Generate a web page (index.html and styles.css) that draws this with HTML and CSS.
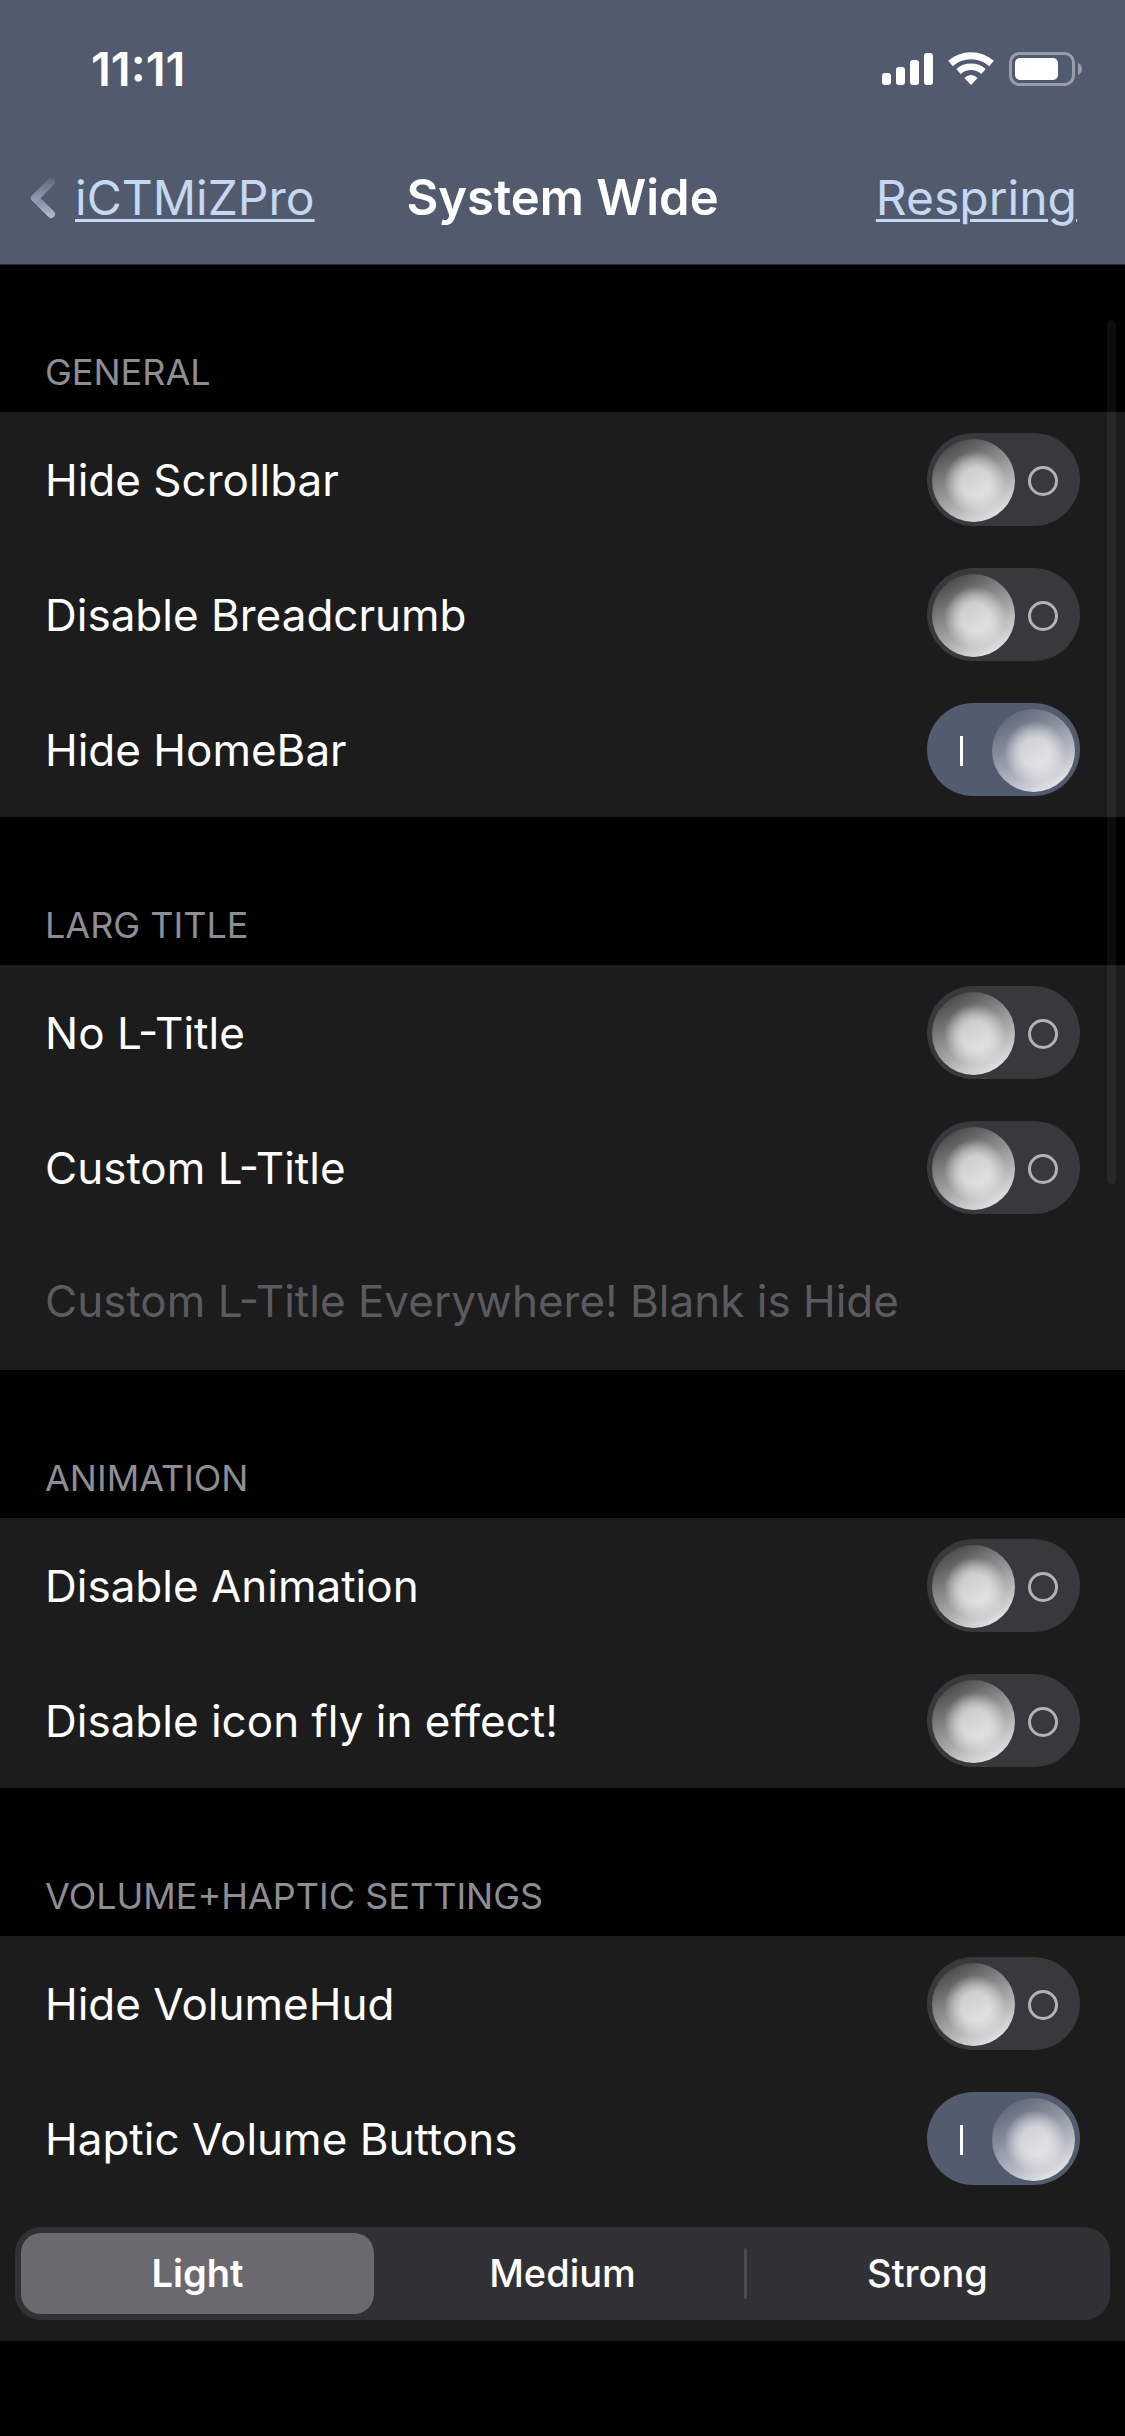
FILE: index.html
```html
<!DOCTYPE html>
<html lang="en">
<head>
<meta charset="utf-8">
<meta name="viewport" content="width=device-width, initial-scale=1">
<title>System Wide</title>
<link rel="stylesheet" href="styles.css">
</head>
<body>
<header class="top">
  <div class="status">
    <time class="clock">11:11</time>
    <svg class="status-icons" width="202" height="36" viewBox="0 0 202 36" fill="#fff" aria-hidden="true">
      <rect x="0" y="22" width="9" height="12" rx="3"/>
      <rect x="14" y="16" width="9" height="18" rx="3"/>
      <rect x="28" y="9" width="9" height="25" rx="3"/>
      <rect x="42" y="2" width="9" height="32" rx="3"/>
      <g fill="none" stroke="#fff">
        <path d="M68.500 12.500A31 31 0 0 1 109.500 12.500" stroke-width="7"/>
        <path d="M76.500 20.500A19 19 0 0 1 101.500 20.500" stroke-width="6.500"/>
      </g>
      <path d="M89 34L82.400 27Q89 21 95.600 27Z"/>
      <rect x="128.500" y="2.500" width="63" height="31" rx="9" fill="none" stroke="#979daa" stroke-width="3"/>
      <rect x="133" y="7" width="43" height="22" rx="5"/>
      <path d="M196 12q4 2 4 6t-4 6z" fill="#979daa"/>
    </svg>
  </div>
  <nav class="nav">
    <a class="nav-link" href="#">
      <svg class="chevron" width="26" height="42" viewBox="0 0 26 42" aria-hidden="true">
        <defs>
          <linearGradient id="upper" gradientUnits="userSpaceOnUse" x1="0" y1="0" x2="0" y2="26">
            <stop offset="0" stop-color="#596577"/><stop offset="1" stop-color="#98a6ba"/>
          </linearGradient>
          <linearGradient id="lower" gradientUnits="userSpaceOnUse" x1="0" y1="18" x2="0" y2="42">
            <stop offset="0" stop-color="#748195"/><stop offset="1" stop-color="#b2c3da"/>
          </linearGradient>
        </defs>
        <g fill="none" stroke-width="8" stroke-linecap="round">
          <path d="M5 21L21 37" stroke="url(#lower)"/>
          <path d="M21 5L5 21" stroke="url(#upper)"/>
        </g>
      </svg>
      <span class="underlined">iCTMiZPro</span>
    </a>
    <h1 class="title">System Wide</h1>
    <a class="nav-link nav-end underlined" href="#">Respring</a>
  </nav>
</header>
<main class="list">
  <section>
    <h2 class="heading">GENERAL</h2>
    <div class="group">
      <label class="row">Hide Scrollbar<input class="switch" type="checkbox"></label>
      <label class="row">Disable Breadcrumb<input class="switch" type="checkbox"></label>
      <label class="row">Hide HomeBar<input class="switch" type="checkbox" checked></label>
    </div>
  </section>
  <section>
    <h2 class="heading">LARG TITLE</h2>
    <div class="group">
      <label class="row">No L-Title<input class="switch" type="checkbox"></label>
      <label class="row">Custom L-Title<input class="switch" type="checkbox"></label>
      <div class="row row-field"><input class="field" type="text" aria-label="Custom large title" placeholder="Custom L-Title Everywhere! Blank is Hide"></div>
    </div>
  </section>
  <section>
    <h2 class="heading">ANIMATION</h2>
    <div class="group">
      <label class="row">Disable Animation<input class="switch" type="checkbox"></label>
      <label class="row">Disable icon fly in effect!<input class="switch" type="checkbox"></label>
    </div>
  </section>
  <section>
    <h2 class="heading">VOLUME+HAPTIC SETTINGS</h2>
    <div class="group">
      <label class="row">Hide VolumeHud<input class="switch" type="checkbox"></label>
      <label class="row">Haptic Volume Buttons<input class="switch" type="checkbox" checked></label>
      <div class="row row-segments">
        <div class="segments" role="group" aria-label="Haptic strength">
          <button class="segment selected" type="button" aria-pressed="true">Light</button>
          <button class="segment" type="button" aria-pressed="false">Medium</button>
          <button class="segment" type="button" aria-pressed="false">Strong</button>
        </div>
      </div>
    </div>
  </section>
  <div class="scrollbar" aria-hidden="true"></div>
</main>
</body>
</html>
```
FILE: styles.css
```css
*,
*::before,
*::after { box-sizing: border-box; }

body {
  margin: 0;
  background: #000;
  color: #fff;
  font-family: Inter, "Liberation Sans", sans-serif;
  font-size: 44px;
  line-height: 60px;
}

/* Status bar and navigation */
.top {
  background: #515b6d;
  box-shadow: 0 1px 0 #2a2e33;
}

.status {
  display: flex;
  justify-content: space-between;
  align-items: center;
  height: 132px;
  padding: 6px 41px 0 91px;
}

.clock {
  font-size: 47px;
  font-weight: 600;
}

.status-icons { display: block; }

.nav {
  display: grid;
  grid-template-columns: 1fr auto 1fr;
  align-items: center;
  height: 132px;
  padding: 0 30px;
  font-size: 48px;
}

.nav-link {
  display: flex;
  align-items: center;
  gap: 19px;
  color: #c5d8f1;
  text-decoration: none;
}

.underlined {
  text-decoration: underline;
  text-decoration-thickness: 3px;
  text-underline-offset: 4px;
}

.nav-end {
  justify-self: end;
  margin-right: 18px;
}

.title {
  margin: 0;
  font-size: 49px;
  font-weight: 600;
}

/* Settings list */
.list { position: relative; }

.heading {
  margin: 0;
  padding: 86px 45px 18px;
  color: #8d8d93;
  font-size: 36px;
  font-weight: 400;
  line-height: 44px;
}

.group { background: #1c1c1c; }

.row {
  display: flex;
  align-items: center;
  justify-content: space-between;
  min-height: 135px;
  padding: 0 45px;
}

.row-field { padding-bottom: 4px; }

.field {
  width: 100%;
  padding: 0;
  border: 0;
  outline: 0;
  background: none;
  color: #fff;
  font: inherit;
}

.field::placeholder {
  color: #5a5a5f;
  opacity: 1;
}

/* Switches */
.switch {
  appearance: none;
  position: relative;
  flex: none;
  width: 153px;
  height: 93px;
  margin: 0;
  border-radius: 47px;
  background: #39383d;
}

.switch::before {
  content: "";
  position: absolute;
  top: 6px;
  left: 5px;
  width: 83px;
  height: 83px;
  border-radius: 50%;
  background:
    radial-gradient(circle at 52% 52%, rgba(255, 255, 255, 0.6) 0 14px, rgba(255, 255, 255, 0.4) 21px, rgba(255, 255, 255, 0) 31px),
    linear-gradient(150deg, #505050 15%, #7c7c7c 35%, #b4b4b4 65%, #ececec 92%);
}

.switch::after {
  content: "";
  position: absolute;
  top: 33px;
  left: 101px;
  width: 30px;
  height: 30px;
  border: 3px solid #b3b3b3;
  border-radius: 50%;
}

.switch:checked { background: #535c6f; }

.switch:checked::before {
  left: 65px;
  background:
    radial-gradient(circle at 52% 52%, rgba(255, 255, 255, 0.6) 0 14px, rgba(255, 255, 255, 0.4) 21px, rgba(255, 255, 255, 0) 31px),
    linear-gradient(150deg, #656e7d 15%, #838997 35%, #b5b9c3 65%, #eeeff0 92%);
}

.switch:checked::after {
  left: 33px;
  width: 3px;
  border: 0;
  border-radius: 0;
  background: #fff;
}

/* Segmented control */
.row-segments { padding: 0 15px; }

.segments {
  display: grid;
  grid-template-columns: repeat(3, 1fr);
  flex: 1;
  height: 93px;
  border-radius: 26px;
  background: #313035;
}

.segment {
  position: relative;
  margin: 6px;
  padding: 0 0 2px;
  border: 0;
  border-radius: 20px;
  background: none;
  color: #fff;
  font: inherit;
  font-size: 38px;
  font-weight: 500;
}

.segment.selected {
  background: #6a696f;
  font-weight: 600;
}

.segment:not(.selected) + .segment::before {
  content: "";
  position: absolute;
  top: 15px;
  left: -7px;
  width: 3px;
  height: 51px;
  border-radius: 2px;
  background: #4b4a50;
}

.scrollbar {
  position: absolute;
  top: 56px;
  right: 9px;
  width: 9px;
  height: 864px;
  border-radius: 5px;
  background: rgba(255, 255, 255, 0.05);
}
```
